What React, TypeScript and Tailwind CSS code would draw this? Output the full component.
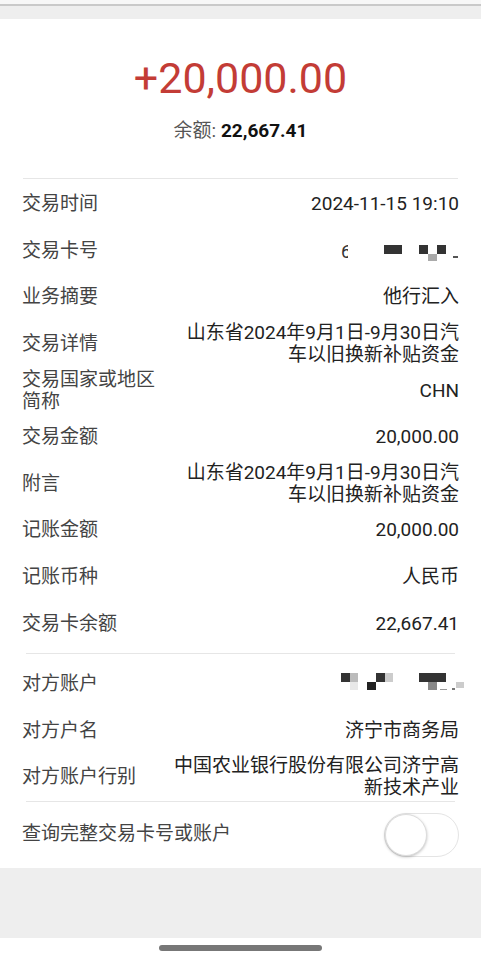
import React from "react";

type Row = { label: string[]; value: React.ReactNode };

const CardMask = () => (
  <svg width="125" height="24" viewBox="335 236 125 24" className="mr-[-1px]">
    <text x="341" y="255" fontSize="18" fill="#333" fontFamily="Roboto, sans-serif">6</text>
    <rect x="348" y="238" width="10" height="20" fill="#fff" />
    <rect x="384" y="242" width="18" height="9" fill="#333" />
    <rect x="419" y="242" width="9" height="9" fill="#333" />
    <rect x="437" y="242" width="9" height="9" fill="#333" />
    <rect x="428" y="251" width="9" height="7" fill="#aaa" />
    <rect x="453" y="253" width="5" height="2" fill="#555" />
  </svg>
);

const AcctMask = () => (
  <svg width="128" height="24" viewBox="338 670 128 24" className="mr-[-7px]">
    <rect x="341" y="671" width="9" height="9" fill="#333" />
    <rect x="350" y="671" width="8" height="9" fill="#bbb" />
    <rect x="350" y="680" width="8" height="8" fill="#e8e8e8" />
    <rect x="367" y="680" width="9" height="8" fill="#222" />
    <rect x="376" y="671" width="9" height="9" fill="#333" />
    <rect x="385" y="671" width="8" height="9" fill="#ccc" />
    <rect x="419" y="671" width="27" height="9" fill="#333" />
    <rect x="428" y="680" width="9" height="8" fill="#888" />
    <rect x="440" y="687" width="7" height="1" fill="#999" />
    <rect x="452" y="686" width="3" height="2" fill="#777" />
    <rect x="456" y="680" width="8" height="6" fill="#ccc" />
  </svg>
);

const Lines = ({ lines }: { lines: string[] }) => (
  <>
    {lines.map((l, i) => (
      <span key={i} className="block whitespace-nowrap">
        {l}
      </span>
    ))}
  </>
);

const section1: Row[] = [
  { label: ["交易时间"], value: <Lines lines={["2024-11-15 19:10"]} /> },
  { label: ["交易卡号"], value: <CardMask /> },
  { label: ["业务摘要"], value: <Lines lines={["他行汇入"]} /> },
  { label: ["交易详情"], value: <Lines lines={["山东省2024年9月1日-9月30日汽", "车以旧换新补贴资金"]} /> },
  { label: ["交易国家或地区", "简称"], value: <Lines lines={["CHN"]} /> },
  { label: ["交易金额"], value: <Lines lines={["20,000.00"]} /> },
  { label: ["附言"], value: <Lines lines={["山东省2024年9月1日-9月30日汽", "车以旧换新补贴资金"]} /> },
  { label: ["记账金额"], value: <Lines lines={["20,000.00"]} /> },
  { label: ["记账币种"], value: <Lines lines={["人民币"]} /> },
  { label: ["交易卡余额"], value: <Lines lines={["22,667.41"]} /> },
];

const section2: Row[] = [
  { label: ["对方账户"], value: <AcctMask /> },
  { label: ["对方户名"], value: <Lines lines={["济宁市商务局"]} /> },
  { label: ["对方账户行别"], value: <Lines lines={["中国农业银行股份有限公司济宁高", "新技术产业"]} /> },
];

const RowView = ({ row }: { row: Row }) => (
  <div className="flex h-[46.6px] items-center justify-between px-[22px]">
    <div className="text-[19px] leading-[22px] text-[#444]">
      <Lines lines={row.label} />
    </div>
    <div className="flex flex-col items-end text-right text-[19px] leading-[22px] text-[#222]">
      {row.value}
    </div>
  </div>
);

export default function App() {
  return (
    <div className="w-[481px] h-[960px] bg-white font-['Roboto','Noto_Sans_CJK_SC',sans-serif] flex flex-col overflow-hidden">
      <div className="h-[4px] bg-[#f7f7f7]" />
      <div className="h-[2px] bg-[#c9c9c9]" />
      <div className="h-[13px] bg-[#eeeeee]" />
      <div className="bg-white flex flex-col">
        <div className="flex flex-col items-center pt-[35px]">
          <div className="text-[43px] leading-[48px] text-[#c33c36]">+20,000.00</div>
          <div className="mt-[17px] text-[19px] leading-[24px] text-[#555]">
            余额: <span className="font-bold text-[#111]">22,667.41</span>
          </div>
        </div>
        <div className="mt-[35px] mx-[23px] h-px bg-[#e6e6e6]" />
        <div className="pt-[2px] pb-[6px]">
          {section1.map((r, i) => (
            <RowView key={i} row={r} />
          ))}
        </div>
        <div className="mx-[26px] h-px bg-[#e6e6e6]" />
        <div className="pt-[7px]">
          {section2.map((r, i) => (
            <RowView key={i} row={r} />
          ))}
        </div>
        <div className="mx-[26px] h-px bg-[#e6e6e6]" />
        <div className="flex h-[66px] items-center justify-between px-[22px]">
          <span className="text-[19px] text-[#444]">查询完整交易卡号或账户</span>
          <div className="flex h-[44px] w-[75px] items-center rounded-full border border-[#e4e4e4] bg-white">
            <div className="h-[42px] w-[42px] rounded-full bg-white border border-[#ddd] shadow-[0_1px_3px_rgba(0,0,0,0.25)]" />
          </div>
        </div>
      </div>
      <div className="h-[70px] bg-[#eeeeee]" />
      <div className="flex flex-1 justify-center bg-white pt-[7px]">
        <div className="h-[6px] w-[163px] rounded-full bg-[#777]" />
      </div>
    </div>
  );
}
